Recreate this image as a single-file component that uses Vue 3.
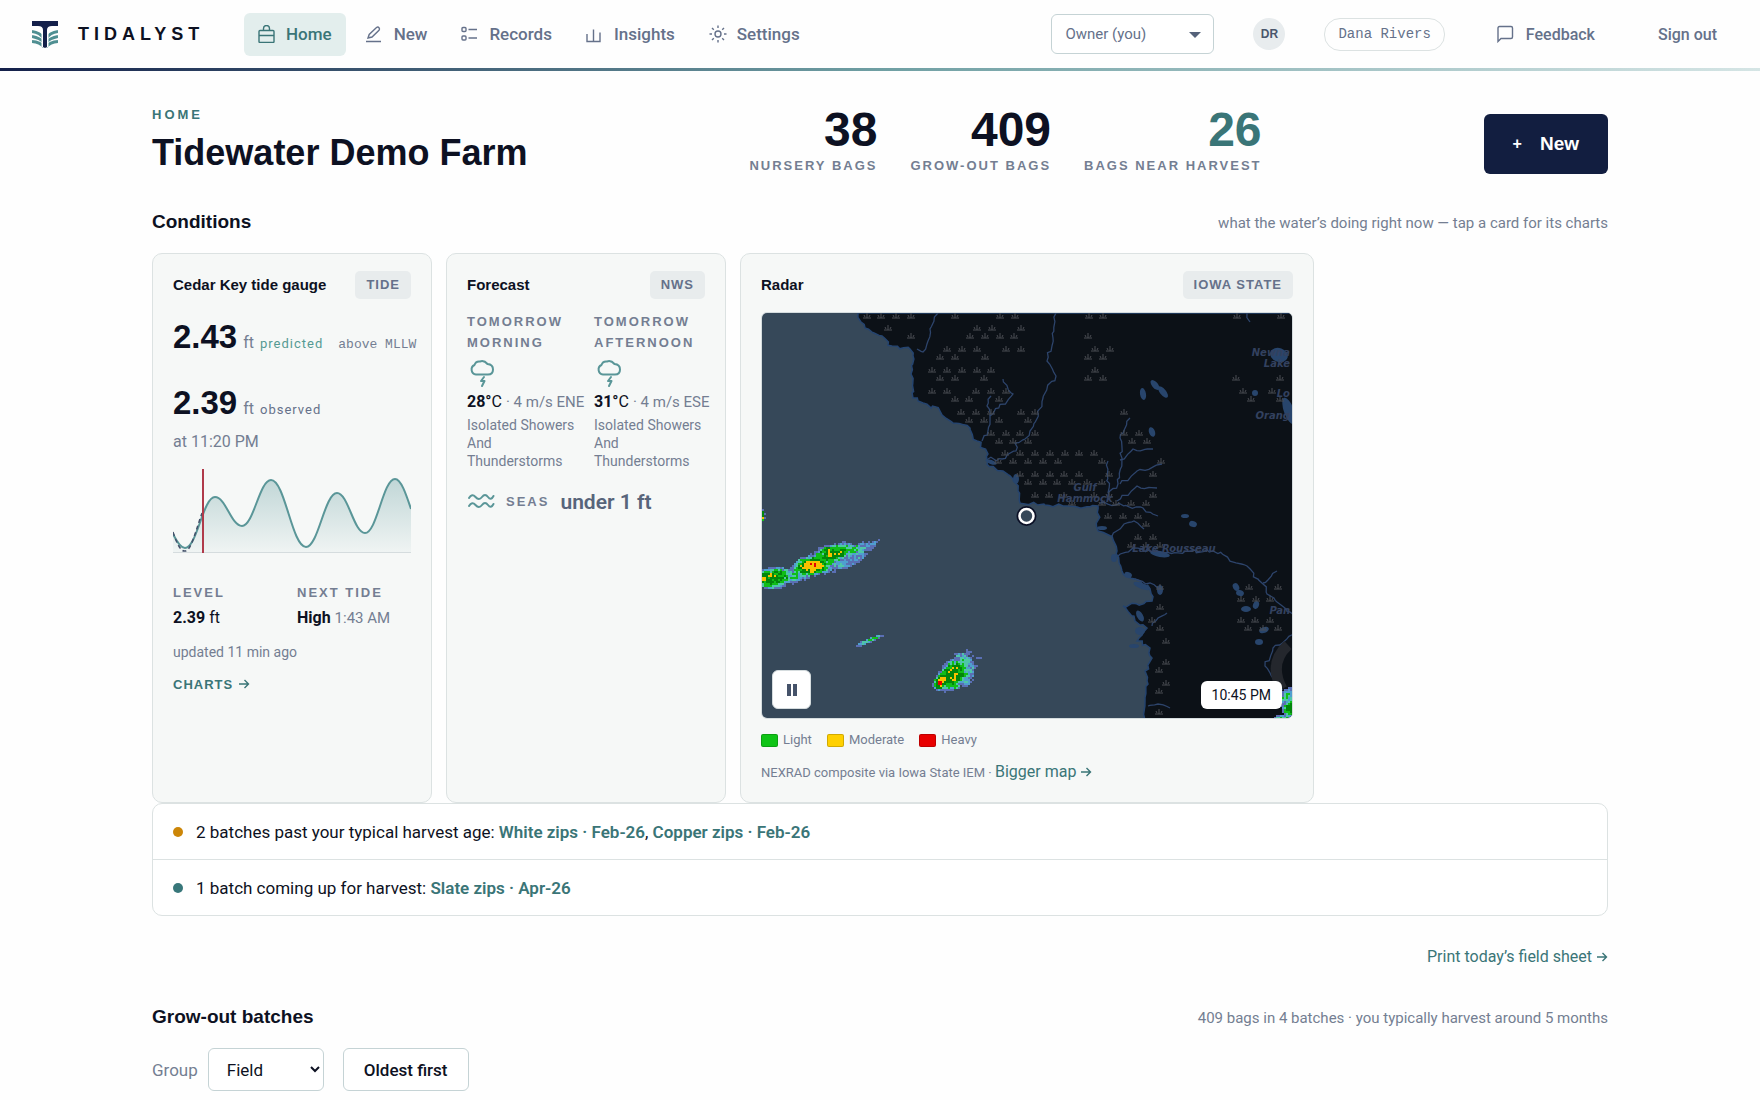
<script setup>
import { ref } from 'vue'

const navItems = [
  { key: 'home', label: 'Home', active: true },
  { key: 'new', label: 'New' },
  { key: 'records', label: 'Records' },
  { key: 'insights', label: 'Insights' },
  { key: 'settings', label: 'Settings' },
]

const stats = [
  { value: 38, label: 'Nursery bags' },
  { value: 409, label: 'Grow-out bags' },
  { value: 26, label: 'Bags near harvest', accent: true },
]

const periods = [
  { name: 'Tomorrow morning', temp: 28, wind: '4 m/s ENE', text: 'Isolated Showers And Thunderstorms' },
  { name: 'Tomorrow afternoon', temp: 31, wind: '4 m/s ESE', text: 'Isolated Showers And Thunderstorms' },
]

const legend = [
  { label: 'Light', tone: 'light' },
  { label: 'Moderate', tone: 'moderate' },
  { label: 'Heavy', tone: 'heavy' },
]

const role = ref('Owner (you)')
const group = ref('Field')

// Tide extremes joined by level-tangent curves
const tide = [[12, 79], [42, 28], [69, 57], [98, 11], [133, 78], [164, 24], [192, 64], [222, 10]]
function tidePath() {
  let d = 'M0 65C4 73 8 79 12 79'
  for (let i = 1; i < tide.length; i++) {
    const [x0, y0] = tide[i - 1]
    const [x1, y1] = tide[i]
    const k = (x1 - x0) * 0.4
    d += `C${x0 + k} ${y0} ${x1 - k} ${y1} ${x1} ${y1}`
  }
  return d + 'C228 10 233 25 238 40'
}
const tideLine = tidePath()
const tideArea = tideLine + 'V83H0Z'

// Repeatable noise in 0..1 for a grid position
function noise(a, b) {
  const n = Math.sin(a * 127.1 + b * 311.7) * 43758.5453
  return n - Math.floor(n)
}

const land = [[96, 0], [99, 9], [103, 15], [112, 20], [120, 23], [130, 33], [148, 36], [151, 43], [149, 61], [151, 85], [161, 90], [178, 98], [191, 110], [208, 115], [215, 128], [226, 141], [225, 151], [241, 158], [251, 166], [256, 178], [258, 190], [268, 191], [301, 193], [318, 195], [336, 193], [336, 218], [350, 223], [355, 238], [360, 258], [373, 266], [388, 276], [390, 288], [361, 293], [373, 308], [385, 315], [375, 328], [388, 335], [390, 345], [383, 358], [386, 371], [383, 388], [381, 407], [540, 407], [540, 0]]

function roughen(points) {
  let d = `M${points[0][0]} ${points[0][1]}`
  for (let i = 1; i < points.length; i++) {
    const [x0, y0] = points[i - 1]
    const [x1, y1] = points[i]
    const steps = Math.max(1, Math.round(Math.hypot(x1 - x0, y1 - y0) / 4))
    for (let s = 1; s <= steps; s++) {
      const jx = s < steps ? (noise(i, s) - 0.5) * 4 : 0
      const jy = s < steps ? (noise(s, i + 9) - 0.5) * 4 : 0
      d += `L${(x0 + ((x1 - x0) * s) / steps + jx).toFixed(1)} ${(y0 + ((y1 - y0) * s) / steps + jy).toFixed(1)}`
    }
  }
  return d
}
const landPath = roughen(land.slice(0, -2)) + 'H540V0Z'

const rivers = [
  [[176, 0], [168, 16], [166, 28], [161, 39], [155, 36]],
  [[294, 0], [291, 25], [285, 48], [294, 63], [281, 85], [276, 100], [268, 118], [263, 126], [253, 130], [254, 138], [240, 146], [226, 146]],
  [[241, 66], [251, 81], [228, 103], [226, 118], [220, 128]],
  [[229, 83], [225, 93], [228, 103]],
  [[368, 105], [358, 125], [360, 145], [356, 171], [346, 184]],
  [[400, 151], [375, 158], [358, 171]],
  [[391, 136], [371, 136], [358, 147]],
  [[395, 175], [375, 173], [355, 188]],
  [[396, 203], [381, 195], [338, 190]],
  [[346, 148], [346, 180]],
  [[356, 243], [371, 235], [401, 240], [451, 238], [485, 253], [501, 271], [505, 281], [532, 302]],
  [[515, 258], [501, 270]],
  [[532, 321], [511, 335], [503, 353], [511, 365], [521, 377]],
  [[373, 266], [388, 270], [400, 279]],
  [[350, 223], [362, 211], [372, 208], [382, 216]],
  [[390, 313], [396, 305], [405, 300]],
  [[386, 393], [396, 391], [408, 395]],
  [[485, 0], [488, 9]],
].map(roughen)

const lakes = [
  [381, 81, 3, 6, -10], [393, 72, 3, 6, -40], [401, 79, 3, 7, -40], [390, 119, 3, 5, -20], [493, 80, 3, 3, 0],
  [517, 42, 9, 7, 20], [527, 98, 5, 14, -20], [423, 203, 4, 2, 0], [431, 211, 4, 3, 20], [474, 274, 3, 4, -30], [478, 280, 4, 3, 20],
  [484, 296, 5, 3, 0], [494, 292, 3, 4, 20], [502, 317, 5, 3, -20], [497, 329, 4, 3, 0], [398, 241, 10, 3, 10],
  [380, 273, 9, 3, 20], [366, 262, 4, 3, 20], [398, 277, 3, 5, 0], [378, 303, 6, 3, 60], [378, 318, 5, 4, 0], [372, 333, 5, 2, 0],
  [254, 166, 3, 5, 0], [229, 149, 6, 2, 20], [340, 215, 5, 2, 0], [352, 245, 3, 4, 0],
]

// Wetland regions: x0, y0, x1, y1, share of symbols kept
const wetlands = [
  [98, 0, 150, 34, 0.6], [180, 0, 260, 38, 0.65], [150, 38, 232, 78, 0.85], [150, 78, 250, 92, 0.6],
  [178, 92, 275, 128, 0.85], [215, 128, 300, 160, 0.85], [248, 158, 348, 192, 0.85], [325, 0, 352, 65, 0.6],
  [288, 138, 345, 160, 0.8], [342, 185, 400, 232, 0.75], [360, 120, 402, 185, 0.45], [355, 90, 372, 128, 0.4],
  [376, 280, 400, 300, 0.9], [388, 300, 410, 385, 0.85], [465, 60, 520, 96, 0.45], [478, 255, 525, 325, 0.4],
  [470, 0, 530, 25, 0.3], [372, 262, 398, 300, 0.6], [384, 385, 400, 405, 0.9],
]
function seaEdge(y) {
  let edge = 0
  for (let i = 1; i < land.length - 2; i++) {
    const [x0, y0] = land[i - 1]
    const [x1, y1] = land[i]
    if (y >= Math.min(y0, y1) - 2 && y <= Math.max(y0, y1) + 4) edge = Math.max(edge, x0, x1)
  }
  return edge
}
function marshPath() {
  let d = ''
  for (let r = 0; r < 40; r++) {
    const y = Math.round(2.5 + Math.floor(r / 2) * 20.85 + (r % 2 ? -8 : 0))
    for (let c = 0; c < 37; c++) {
      const x = Math.round(1 + c * 14.8 + (r % 2 ? 7 : 0) - Math.floor(r / 2) * 0.2)
      const zone = wetlands.find((w) => x >= w[0] && x <= w[2] && y >= w[1] && y <= w[3])
      if (!zone || noise(c, r) > zone[4] || x < seaEdge(y) + 5) continue
      d += `M${x - 4} ${y + 2}h8M${x} ${y + 2}v-5M${x - 2} ${y + 1}l-1-2M${x + 2} ${y + 1}l1-2`
    }
  }
  return d
}
const marsh = marshPath()

// Radar cells: cx, cy, rx, ry, rotation in degrees, peak strength
const cells = [
  [9, 264, 22, 10, -4, 0.74], [2, 265, 7, 3, 0, 0.9], [32, 262, 14, 6, -15, 0.3], [49, 252, 21, 10, -12, 1.02],
  [70, 240, 25, 9, -16, 0.7], [64, 236, 10, 3, -20, 0.8], [86, 238, 22, 6, -14, 0.34], [78, 248, 20, 6, -20, 0.16],
  [104, 233, 11, 2, -30, 0.2], [108, 326, 14, 2, -22, 0.4], [190, 361, 18, 13, -45, 0.74], [179, 367, 11, 7, -50, 1.05],
  [177, 369, 4, 4, 0, 1.4], [199, 356, 11, 16, 10, 0.34], [216, 344, 2, 1, 0, 0.15], [192, 354, 9, 4, -30, 0.82],
  [528, 394, 8, 9, 0, 0.7], [528, 384, 12, 8, 0, 0.3], [524, 405, 11, 4, 0, 0.4], [451, 370, 8, 3, 0, 0.4],
  [0, 202, 2, 6, 0, 0.8],
]
const bands = [
  [1.12, '#e60000'], [0.78, '#f8c000'], [0.54, '#02860c'], [0.32, '#10bd18'], [0.2, '#4fc6a8'], [0.08, '#4f9fcf'], [-0.1, '#5a6fb4'],
]
function echoPaths() {
  const out = bands.map(([, color]) => ({ color, d: '' }))
  for (let y = 190; y < 407; y += 2) {
    for (let x = 0; x < 532; x += 2) {
      let v = -1
      for (const [cx, cy, rx, ry, rot, peak] of cells) {
        const a = (rot * Math.PI) / 180
        const dx = x - cx
        const dy = y - cy
        const u = (dx * Math.cos(a) + dy * Math.sin(a)) / rx
        const w = (-dx * Math.sin(a) + dy * Math.cos(a)) / ry
        const dist = Math.sqrt(u * u + w * w)
        if (dist < 1.4) v = Math.max(v, peak * (1.02 - dist * dist))
      }
      if (v < -0.4) continue
      const patch = noise(Math.floor(x / 6), Math.floor(y / 4)) - 0.5
      v += (noise(x, y) - 0.5) * 0.28 + patch * 0.22
      const i = bands.findIndex(([t]) => v > t)
      if (i >= 0) out[i].d += `M${x} ${y}h2v2h-2z`
    }
  }
  return out
}
const echoes = echoPaths()
</script>

<template>
  <div class="page">
    <header class="topbar">
      <div class="bar">
        <a class="brand" href="#">
          <svg class="logo" viewBox="0 0 26 27" aria-hidden="true">
            <g fill="none" stroke="#4f8f92" stroke-width="3">
              <path d="M0 10.500Q8 11.500 12 17.500M0 15.500Q8 17 12 21.500M0 20.500Q8 21 12 26" />
              <path d="M26 10.500Q18 11.500 14 17.500M26 15.500Q18 17 14 21.500M26 20.500Q18 21 14 26" />
            </g>
            <path d="M9.500 6H16.500V26L13 27L9.500 26Z" fill="#fff" />
            <path d="M0 0H26V5H20Q15 5 15 9V26L13 27L11 26V9Q11 5 6 5H0Z" fill="#14204a" />
          </svg>
          <span class="wordmark">TIDALYST</span>
        </a>
        <nav class="nav" aria-label="Main">
          <a v-for="item in navItems" :key="item.key" href="#" class="nav-item" :class="{ active: item.active }">
            <svg class="icon" viewBox="0 0 18 18" aria-hidden="true">
              <g v-if="item.key === 'home'">
                <rect x="1" y="5.500" width="15" height="12" rx="1" />
                <path d="M1 10.500H16M5.500 5.500V3.500a3 3 0 0 1 6 0V5.500" />
              </g>
              <g v-else-if="item.key === 'new'">
                <path d="M0 16.500H15M2 13L3.200 9.500L10.500 2.500Q12 1.500 13 2.700T13 5.300L6 12Z" />
              </g>
              <g v-else-if="item.key === 'records'">
                <rect x="1" y="2.500" width="4" height="4" rx="1" />
                <rect x="1" y="11" width="4" height="4" rx="1" />
                <path d="M7.500 4.500H16M7.500 13H16" />
              </g>
              <g v-else-if="item.key === 'insights'">
                <path d="M1 9V16.500H14V7.500M7.500 16V4.500" />
              </g>
              <g v-else>
                <circle cx="9" cy="9" r="3" />
                <path d="M9 .5V3M9 15V17.500M.5 9H3M15 9H17.500M3 3L4.800 4.800M13.200 13.200L15 15M3 15L4.800 13.200M13.200 4.800L15 3" />
              </g>
            </svg>
            <span>{{ item.label }}</span>
          </a>
        </nav>
        <div class="account">
          <div class="role">
            <select v-model="role" aria-label="Role">
              <option>Owner (you)</option>
            </select>
            <svg class="caret" viewBox="0 0 12 6" aria-hidden="true"><path d="M0 0H12L6 6Z" /></svg>
          </div>
          <span class="avatar">DR</span>
          <span class="user">Dana Rivers</span>
          <button type="button" class="plain feedback">
            <svg class="icon" viewBox="0 0 18 18" aria-hidden="true">
              <path d="M2 16.500V3Q2 1.500 3.500 1.500H15Q16.500 1.500 16.500 3V12Q16.500 13.500 15 13.500H5Z" />
            </svg>
            Feedback
          </button>
          <button type="button" class="plain">Sign out</button>
        </div>
      </div>
      <div class="rule"></div>
    </header>

    <main class="main">
      <section class="hero">
        <div>
          <p class="eyebrow">Home</p>
          <h1>Tidewater Demo Farm</h1>
        </div>
        <dl class="stats">
          <div v-for="s in stats" :key="s.label" class="stat" :class="{ accent: s.accent }">
            <dt>{{ s.label }}</dt>
            <dd>{{ s.value }}</dd>
          </div>
        </dl>
        <button type="button" class="primary"><span class="plus">+</span>New</button>
      </section>

      <div class="section-head">
        <h2>Conditions</h2>
        <p>what the water’s doing right now — tap a card for its charts</p>
      </div>

      <section class="cards">
        <article class="card">
          <div class="card-head">
            <h3>Cedar Key tide gauge</h3>
            <span class="badge">Tide</span>
          </div>
          <p class="reading"><b>2.43</b> <span class="unit">ft</span> <span class="kind predicted">predicted</span> <span class="datum">above MLLW</span></p>
          <p class="reading second"><b>2.39</b> <span class="unit">ft</span> <span class="kind">observed</span></p>
          <p class="at">at 11:20 PM</p>
          <svg class="tide" viewBox="0 0 238 84" preserveAspectRatio="none" role="img" aria-label="Tide curve">
            <defs>
              <linearGradient id="tide-fill" x1="0" y1="0" x2="0" y2="1">
                <stop offset="0" stop-color="#4f8f92" stop-opacity=".32" />
                <stop offset="1" stop-color="#4f8f92" stop-opacity=".04" />
              </linearGradient>
            </defs>
            <path d="M0 83.500H238" stroke="#d5dcde" />
            <path :d="tideArea" fill="url(#tide-fill)" />
            <path :d="tideLine" fill="none" stroke="#5a9698" stroke-width="2" />
            <path d="M0 63C4 75 8 83 12 82C18 82 22 64 29 44" fill="none" stroke="#43506a" stroke-width="1.500" stroke-dasharray="4 3" />
            <path d="M30 0V84" stroke="#b03a4a" stroke-width="2" />
          </svg>
          <dl class="facts">
            <div>
              <dt>Level</dt>
              <dd><b>2.39</b> ft</dd>
            </div>
            <div>
              <dt>Next tide</dt>
              <dd><b>High</b> <span class="muted">1:43 AM</span></dd>
            </div>
          </dl>
          <p class="updated">updated 11 min ago</p>
          <a class="charts" href="#">Charts <svg class="arrow" viewBox="0 0 12 10" aria-hidden="true"><path d="M1 5H10.500M6.500 1L10.500 5L6.500 9" /></svg></a>
        </article>

        <article class="card">
          <div class="card-head">
            <h3>Forecast</h3>
            <span class="badge">NWS</span>
          </div>
          <div class="periods">
            <div v-for="p in periods" :key="p.name" class="period">
              <h4>{{ p.name }}</h4>
              <svg class="storm" viewBox="0 0 30 30" aria-hidden="true">
                <path d="M9 16.500A5 5 0 0 1 7.500 7A5 5 0 0 1 13 3.500Q17 2 20.500 6Q26 6.500 26 11.500Q26 16.500 21 16.500Z" />
                <path d="M17 19L14 23H17.500L15 28" />
              </svg>
              <p class="temp"><b>{{ p.temp }}°</b>C <span>· {{ p.wind }}</span></p>
              <p class="sky">{{ p.text }}</p>
            </div>
          </div>
          <p class="seas">
            <svg viewBox="0 0 28 20" aria-hidden="true">
              <path d="M2 6Q5 1 8.500 5T15 5T21 5T26.500 4M2 14Q5 9 8.500 13T15 13T21 13T26.500 12" />
            </svg>
            <span class="seas-label">Seas</span>
            <b>under 1 ft</b>
          </p>
        </article>

        <article class="card wide">
          <div class="card-head">
            <h3>Radar</h3>
            <span class="badge">Iowa State</span>
          </div>
          <div class="map">
            <svg class="map-art" viewBox="0 0 530 405" preserveAspectRatio="xMidYMid slice" role="img" aria-label="Radar map">
              <rect width="530" height="407" fill="#364859" />
              <path :d="landPath" fill="#0c1117" stroke="#25446f" stroke-width="1.500" />
              <g fill="#28456c">
                <ellipse v-for="(l, i) in lakes" :key="i" :cx="l[0]" :cy="l[1]" :rx="l[2]" :ry="l[3]" :transform="`rotate(${l[4]} ${l[0]} ${l[1]})`" />
              </g>
              <g fill="none" stroke="#2d446b" stroke-width="1.300">
                <path v-for="(r, i) in rivers" :key="i" :d="r" />
              </g>
              <path :d="marsh" fill="none" stroke="#4b4e54" stroke-width="1" />
              <g class="places">
                <text x="323" y="178">Gulf</text>
                <text x="323" y="189">Hammock</text>
                <text x="412" y="239">Lake Rousseau</text>
                <g class="edge">
                  <text x="528" y="43">Newna</text>
                  <text x="528" y="54">Lake</text>
                  <text x="528" y="84">Lo</text>
                  <text x="528" y="106">Orang</text>
                  <text x="528" y="301">Pan</text>
                </g>
              </g>
              <path d="M526 332Q506 350 520 376" fill="none" stroke="#24272d" stroke-width="11" />
              <path v-for="e in echoes" :key="e.color" :d="e.d" :fill="e.color" shape-rendering="crispEdges" />
              <circle cx="264.500" cy="203" r="8" fill="#364859" stroke="#0b1026" stroke-width="4" />
              <circle cx="264.500" cy="203" r="7" fill="none" stroke="#fff" stroke-width="2.600" />
            </svg>
            <button type="button" class="pause" aria-label="Pause">
              <svg viewBox="0 0 10 12" aria-hidden="true"><path d="M0 0H4V12H0ZM6 0H10V12H6Z" /></svg>
            </button>
            <span class="time">10:45 PM</span>
          </div>
          <ul class="legend">
            <li v-for="l in legend" :key="l.label"><span class="swatch" :class="l.tone"></span>{{ l.label }}</li>
          </ul>
          <p class="source">NEXRAD composite via Iowa State IEM · <a href="#">Bigger map <svg class="arrow" viewBox="0 0 12 10" aria-hidden="true"><path d="M1 5H10.500M6.500 1L10.500 5L6.500 9" /></svg></a></p>
        </article>
      </section>

      <ul class="alerts">
        <li><span class="dot warn"></span><span>2 batches past your typical harvest age: <a href="#">White zips · Feb-26</a>, <a href="#">Copper zips · Feb-26</a></span></li>
        <li><span class="dot"></span><span>1 batch coming up for harvest: <a href="#">Slate zips · Apr-26</a></span></li>
      </ul>

      <p class="print"><a href="#">Print today’s field sheet <svg class="arrow" viewBox="0 0 12 10" aria-hidden="true"><path d="M1 5H10.500M6.500 1L10.500 5L6.500 9" /></svg></a></p>

      <div class="section-head">
        <h2>Grow-out batches</h2>
        <p>409 bags in 4 batches · you typically harvest around 5 months</p>
      </div>
      <div class="controls">
        <label for="group">Group</label>
        <select id="group" v-model="group">
          <option>Field</option>
        </select>
        <button type="button">Oldest first</button>
      </div>
    </main>
  </div>
</template>

<style>
body {
  margin: 0;
  background: #fefefe;
}
</style>

<style scoped>
.page {
  --head: "Liberation Sans", Arial, sans-serif;
  --body: Roboto, "Liberation Sans", sans-serif;
  --mono: "Liberation Mono", monospace;
  --ink: #0d1122;
  --slate: #65718a;
  --muted: #747e92;
  --teal: #3a7577;
  --line: #dce2e2;
  font-family: var(--body);
  font-size: 16px;
  line-height: 24px;
  color: var(--ink);
  padding-bottom: 8px;
}
h1, h2, h3, h4, p, dl, dd, ul {
  margin: 0;
  padding: 0;
}
ul { list-style: none; }
a { color: var(--teal); text-decoration: none; }
button, select { font-family: inherit; font-size: 16px; }
.icon {
  width: 18px;
  height: 18px;
  fill: none;
  stroke: currentColor;
  stroke-width: 1.4;
}
.arrow {
  width: 12px;
  height: 10px;
  fill: none;
  stroke: currentColor;
  stroke-width: 1.4;
}

.bar {
  display: flex;
  align-items: center;
  height: 68px;
  padding: 0 28px 0 32px;
}
.rule {
  height: 3px;
  background: linear-gradient(90deg, #14204a, #6f9fa3 50%, #d5e5e5);
}
.brand { display: flex; align-items: center; gap: 20px; color: var(--ink); }
.logo { width: 26px; height: 27px; }
.wordmark {
  width: 130px;
  font-family: var(--head);
  font-size: 18px;
  font-weight: 700;
  letter-spacing: 5px;
}
.nav { display: flex; gap: 6px; margin-left: 36px; }
.nav-item {
  display: flex;
  align-items: center;
  gap: 10px;
  height: 43px;
  padding: 0 14px;
  border-radius: 6px;
  font-size: 17px;
  font-weight: 500;
  color: var(--slate);
}
.nav-item.active { background: #e3eeed; color: var(--teal); }
.account { display: flex; align-items: center; margin-left: auto; }
.role { position: relative; margin-right: 39px; }
.role select {
  width: 163px;
  height: 40px;
  padding: 0 13px;
  border: 1px solid #c5d3d5;
  border-radius: 6px;
  background: #fff;
  color: var(--slate);
  font-size: 15px;
  appearance: none;
}
.caret {
  position: absolute;
  right: 13px;
  top: 18px;
  width: 12px;
  height: 6px;
  fill: #55627a;
  pointer-events: none;
}
.avatar {
  width: 32px;
  height: 32px;
  margin-right: 39px;
  border-radius: 50%;
  background: #e8ecee;
  color: #4a566c;
  font-family: var(--head);
  font-size: 12px;
  font-weight: 700;
  line-height: 32px;
  text-align: center;
}
.user {
  margin-right: 36px;
  padding: 0 13px;
  border: 1px solid var(--line);
  border-radius: 16px;
  font-family: var(--mono);
  font-size: 14px;
  line-height: 31px;
  color: var(--slate);
}
.plain {
  display: flex;
  align-items: center;
  gap: 12px;
  padding: 0 15px;
  border: 0;
  background: none;
  color: var(--slate);
  font-weight: 500;
}
.feedback { margin-right: 33px; }

.main {
  max-width: 1456px;
  margin: 0 auto;
  padding: 35px 32px 0;
}
.hero { display: flex; align-items: flex-end; justify-content: space-between; }
.eyebrow {
  margin-bottom: 9px;
  font-family: var(--head);
  font-size: 13px;
  font-weight: 700;
  line-height: 16px;
  letter-spacing: 3px;
  text-transform: uppercase;
  color: var(--teal);
}
h1 {
  font-family: var(--head);
  font-size: 36px;
  line-height: 42px;
}
.stats { display: flex; gap: 33px; }
.stat { display: flex; flex-direction: column-reverse; gap: 4px; text-align: right; }
.stat dt {
  font-family: var(--head);
  font-size: 13px;
  font-weight: 700;
  line-height: 16px;
  letter-spacing: 2px;
  text-transform: uppercase;
  color: var(--muted);
}
.stat dd {
  font-family: var(--head);
  font-size: 48px;
  font-weight: 700;
  line-height: 48px;
}
.accent dd { color: var(--teal); }
.primary {
  display: flex;
  align-items: center;
  gap: 18px;
  height: 60px;
  padding: 0 29px;
  border: 0;
  border-radius: 6px;
  background: #121e40;
  color: #fff;
  font-family: var(--head);
  font-size: 19px;
  font-weight: 700;
}
.plus { font-size: 16px; }

.section-head {
  display: flex;
  align-items: baseline;
  justify-content: space-between;
  margin: 36px 0 18px;
}
h2 { font-family: var(--head); font-size: 19px; line-height: 24px; }
.section-head p { font-size: 15px; color: var(--muted); }

.cards { display: grid; grid-template-columns: repeat(5, 1fr); gap: 14px; }
.card {
  min-width: 0;
  padding: 17px 20px;
  border: 1px solid var(--line);
  border-radius: 10px;
  background: #f6f8f7;
}
.wide { grid-column: span 2; }
.card-head { display: flex; align-items: center; justify-content: space-between; height: 28px; }
h3 { font-family: var(--head); font-size: 15px; line-height: 20px; }
.badge {
  padding: 0 11px;
  border-radius: 5px;
  background: #e8eced;
  color: var(--slate);
  font-family: var(--head);
  font-size: 13px;
  font-weight: 700;
  line-height: 28px;
  letter-spacing: 1px;
  text-transform: uppercase;
}
.reading {
  display: flex;
  align-items: baseline;
  gap: 6px;
  margin-top: 18px;
  white-space: nowrap;
}
.reading.second { margin-top: 26px; }
.reading b { font-family: var(--head); font-size: 33px; line-height: 40px; }
.unit { color: var(--muted); }
.kind { font-size: 13px; letter-spacing: 1px; color: var(--slate); }
.predicted { color: #559a93; }
.datum { margin-left: 9px; font-family: var(--mono); font-size: 13px; color: var(--muted); }
.at { margin-top: 7px; color: var(--muted); }
.tide { display: block; width: 100%; height: 84px; margin-top: 15px; }
.facts { display: grid; grid-template-columns: 1fr 1fr; column-gap: 10px; margin-top: 30px; }
.facts dt, h4, .seas-label {
  font-family: var(--head);
  font-size: 13px;
  font-weight: 700;
  line-height: 20px;
  letter-spacing: 2px;
  text-transform: uppercase;
  color: var(--muted);
}
.facts dd { margin-top: 3px; }
.muted { font-size: 15px; color: var(--muted); }
.updated { margin-top: 12px; font-size: 14px; line-height: 20px; color: var(--muted); }
.charts {
  display: inline-block;
  margin-top: 13px;
  font-family: var(--head);
  font-size: 13px;
  font-weight: 700;
  line-height: 20px;
  letter-spacing: 1px;
  text-transform: uppercase;
}

.periods { display: grid; grid-template-columns: 1fr 1fr; gap: 16px; margin-top: 12px; }
.period { min-width: 0; }
.period h4 { line-height: 21px; }
.storm { display: block; width: 30px; height: 30px; margin-top: 5px; }
.storm, .seas svg { fill: none; stroke: #5a9698; stroke-width: 2; stroke-linejoin: round; stroke-linecap: round; }
.temp { margin-top: 3px; line-height: 22px; white-space: nowrap; }
.temp span { color: var(--muted); font-size: 15px; }
.sky { margin-top: 3px; font-size: 14px; line-height: 18px; color: var(--muted); }
.seas { display: flex; align-items: center; gap: 11px; margin-top: 18px; line-height: 28px; }
.seas svg { width: 28px; height: 20px; }
.seas b { font-size: 21px; font-weight: 600; color: #58657b; }

.map {
  position: relative;
  box-sizing: border-box;
  margin-top: 13px;
  aspect-ratio: 532 / 407;
  border: 1px solid #d5dcde;
  border-radius: 6px;
  overflow: hidden;
}
.map-art { display: block; width: 100%; height: 100%; }
.places {
  font-family: "DejaVu Sans", sans-serif;
  font-size: 10px;
  font-style: italic;
  font-weight: 700;
  text-anchor: middle;
  fill: #33415f;
}
.edge { text-anchor: end; }
.pause {
  position: absolute;
  left: 10px;
  bottom: 9px;
  display: grid;
  place-items: center;
  width: 39px;
  height: 39px;
  padding: 0;
  border: 1px solid #d5dcde;
  border-radius: 6px;
  background: #fff;
}
.pause svg { width: 10px; height: 12px; fill: #46536a; }
.time {
  position: absolute;
  right: 10px;
  bottom: 9px;
  padding: 0 11px;
  border-radius: 6px;
  background: #fff;
  font-size: 14px;
  line-height: 28px;
}
.legend { display: flex; gap: 15px; margin-top: 11px; }
.legend li { display: flex; align-items: center; gap: 5px; font-size: 13px; line-height: 20px; color: var(--muted); }
.swatch { box-sizing: border-box; width: 17px; height: 13px; border: 1px solid #0000002e; border-radius: 2px; }
.light { background: #0fc416; }
.moderate { background: #ffd000; }
.heavy { background: #e80000; }
.source { margin-top: 10px; font-size: 13px; color: var(--muted); }
.source a { font-size: 16px; }

.alerts { border: 1px solid var(--line); border-radius: 10px; background: #fff; font-size: 17px; }
.alerts li { display: flex; align-items: center; gap: 13px; height: 55px; padding: 0 20px; }
.alerts li + li { border-top: 1px solid var(--line); }
.alerts a { font-weight: 600; }
.dot { width: 10px; height: 10px; border-radius: 50%; background: #38777a; }
.warn { background: #cc8608; }
.print { margin-top: 29px; text-align: right; }

.controls { display: flex; align-items: center; font-size: 17px; }
.controls label { color: var(--muted); }
.controls select, .controls button {
  box-sizing: border-box;
  height: 43px;
  border: 1px solid #c5d3d5;
  border-radius: 6px;
  background: #fff;
  color: var(--ink);
  font-size: 17px;
}
.controls select { width: 116px; margin: 0 19px 0 10px; padding: 0 0 0 14px; }
.controls button { padding: 0 20px; font-weight: 500; }
</style>
